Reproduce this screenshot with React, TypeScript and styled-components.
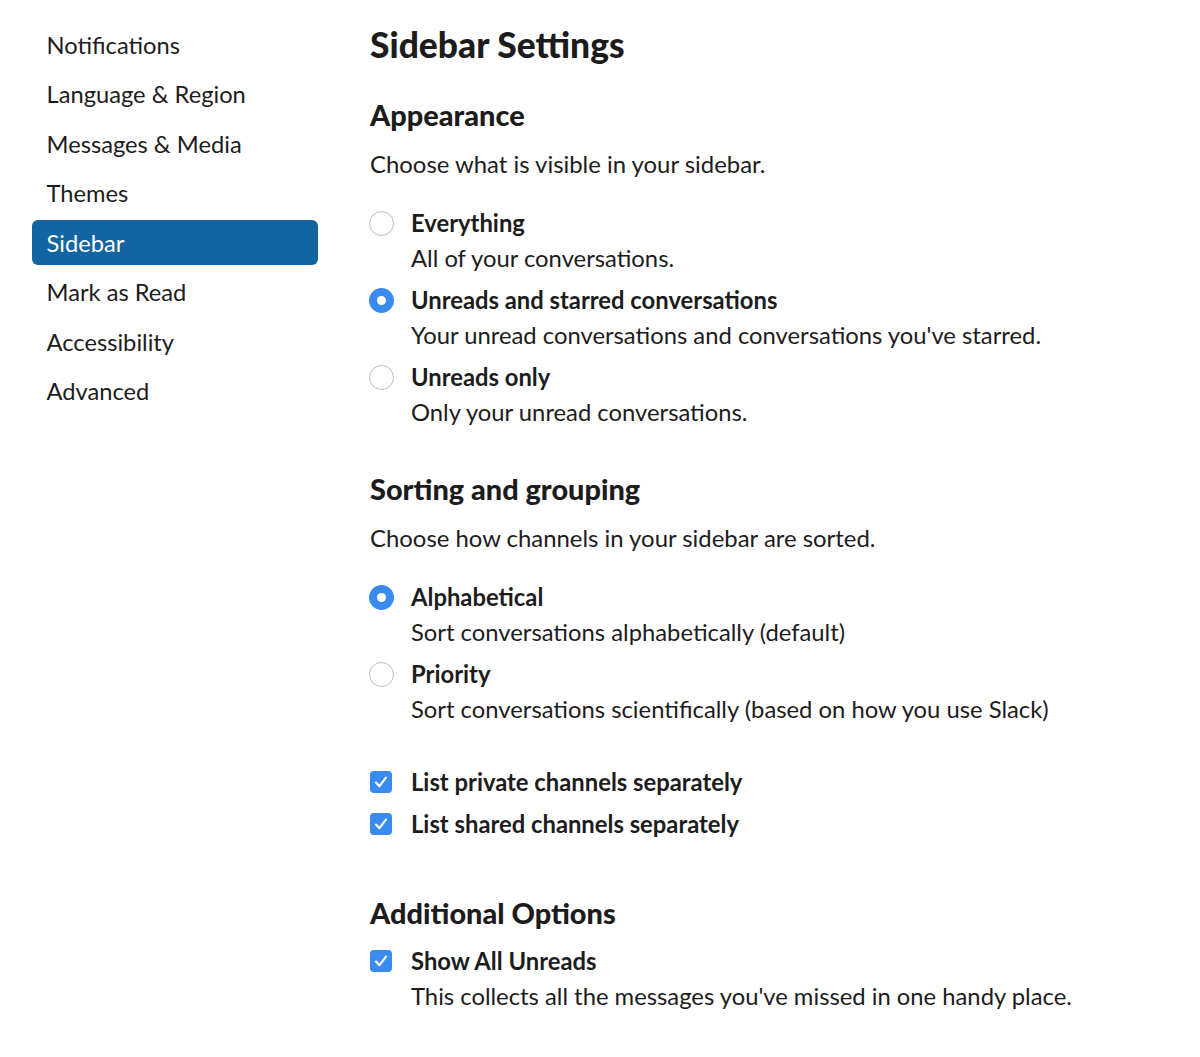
import React from "react";
import styled, { createGlobalStyle } from "styled-components";

const Global = createGlobalStyle`
  html, body { margin: 0; padding: 0; background: #ffffff; }
  body { font-family: Lato, "Open Sans", sans-serif; color: #1d1c1d; -webkit-font-smoothing: antialiased; }
  * { box-sizing: border-box; }
`;

const Page = styled.div`
  display: flex;
  align-items: flex-start;
  width: 1200px;
  min-height: 1057px;
`;

const Nav = styled.nav`
  display: flex;
  flex-direction: column;
  gap: 4.5px;
  width: 286px;
  margin-left: 32px;
  padding-top: 22px;
`;

const NavItem = styled.div<{ $active?: boolean }>`
  height: 45px;
  display: flex;
  align-items: center;
  padding-left: 14.5px;
  border-radius: 6px;
  font-size: 23.7px;
  background: ${(p) => (p.$active ? "#1264a3" : "transparent")};
  color: ${(p) => (p.$active ? "#ffffff" : "#1d1c1d")};
`;

const Main = styled.main`
  margin-left: 52px;
  padding-top: 25px;
  display: flex;
  flex-direction: column;
`;

const Title = styled.h1`
  margin: 0;
  font-size: 35.4px;
  line-height: 40px;
  font-weight: 900;
`;

const Heading = styled.h2<{ $top: number }>`
  margin: ${(p) => p.$top}px 0 0;
  font-size: 28.9px;
  line-height: 34px;
  font-weight: 900;
`;

const Lead = styled.p`
  margin: 18px 0 0;
  font-size: 23.9px;
  line-height: 28px;
`;

const OptionList = styled.div<{ $top: number }>`
  margin-top: ${(p) => p.$top}px;
  display: flex;
  flex-direction: column;
  gap: 14px;
`;

const Option = styled.div`
  display: grid;
  grid-template-columns: 25px 1fr;
  column-gap: 16px;
  row-gap: 7px;
  align-items: center;
`;

const OptionTitle = styled.div`
  font-size: 23.8px;
  line-height: 28px;
  font-weight: 700;
`;

const OptionDesc = styled.div`
  grid-column: 2;
  font-size: 23.8px;
  line-height: 28px;
`;

const Radio = styled.span<{ $checked?: boolean }>`
  width: 25px;
  height: 25px;
  margin-left: -1px;
  border-radius: 50%;
  display: flex;
  align-items: center;
  justify-content: center;
  background: ${(p) => (p.$checked ? "#3a8bef" : "#ffffff")};
  border: ${(p) => (p.$checked ? "none" : "1.5px solid #bdbdbd")};
  &::after {
    content: "";
    display: ${(p) => (p.$checked ? "block" : "none")};
    width: 9px;
    height: 9px;
    border-radius: 50%;
    background: #ffffff;
  }
`;

const Check = styled.span`
  width: 22px;
  height: 22px;
  border-radius: 4px;
  background: #3a8bef;
  display: flex;
  align-items: center;
  justify-content: center;
`;

const CheckMark = () => (
  <svg width="18" height="18" viewBox="0 0 18 18" fill="none">
    <path d="M4 9.6 L7.4 13.2 L14 4.6" stroke="#fff" strokeWidth="2.2" strokeLinecap="round" strokeLinejoin="round" />
  </svg>
);

const navItems = [
  "Notifications",
  "Language & Region",
  "Messages & Media",
  "Themes",
  "Sidebar",
  "Mark as Read",
  "Accessibility",
  "Advanced",
];

type Opt = { title: string; desc?: string; checked?: boolean };

const RadioGroup = ({ items, top }: { items: Opt[]; top: number }) => (
  <OptionList $top={top}>
    {items.map((o) => (
      <Option key={o.title}>
        <Radio $checked={o.checked} />
        <OptionTitle>{o.title}</OptionTitle>
        {o.desc && <OptionDesc>{o.desc}</OptionDesc>}
      </Option>
    ))}
  </OptionList>
);

const CheckGroup = ({ items, top }: { items: Opt[]; top: number }) => (
  <OptionList $top={top}>
    {items.map((o) => (
      <Option key={o.title}>
        <Check>
          <CheckMark />
        </Check>
        <OptionTitle>{o.title}</OptionTitle>
        {o.desc && <OptionDesc>{o.desc}</OptionDesc>}
      </Option>
    ))}
  </OptionList>
);

export default function App() {
  return (
    <>
      <Global />
      <Page>
        <Nav>
          {navItems.map((n) => (
            <NavItem key={n} $active={n === "Sidebar"}>
              {n}
            </NavItem>
          ))}
        </Nav>
        <Main>
          <Title>Sidebar Settings</Title>
          <Heading $top={33}>Appearance</Heading>
          <Lead>Choose what is visible in your sidebar.</Lead>
          <RadioGroup
            top={31}
            items={[
              { title: "Everything", desc: "All of your conversations." },
              {
                title: "Unreads and starred conversations",
                desc: "Your unread conversations and conversations you've starred.",
                checked: true,
              },
              { title: "Unreads only", desc: "Only your unread conversations." },
            ]}
          />
          <Heading $top={46}>Sorting and grouping</Heading>
          <Lead>Choose how channels in your sidebar are sorted.</Lead>
          <RadioGroup
            top={31}
            items={[
              { title: "Alphabetical", desc: "Sort conversations alphabetically (default)", checked: true },
              { title: "Priority", desc: "Sort conversations scientifically (based on how you use Slack)" },
            ]}
          />
          <CheckGroup
            top={45}
            items={[
              { title: "List private channels separately" },
              { title: "List shared channels separately" },
            ]}
          />
          <Heading $top={58}>Additional Options</Heading>
          <CheckGroup
            top={17}
            items={[
              {
                title: "Show All Unreads",
                desc: "This collects all the messages you've missed in one handy place.",
              },
            ]}
          />
        </Main>
      </Page>
    </>
  );
}
